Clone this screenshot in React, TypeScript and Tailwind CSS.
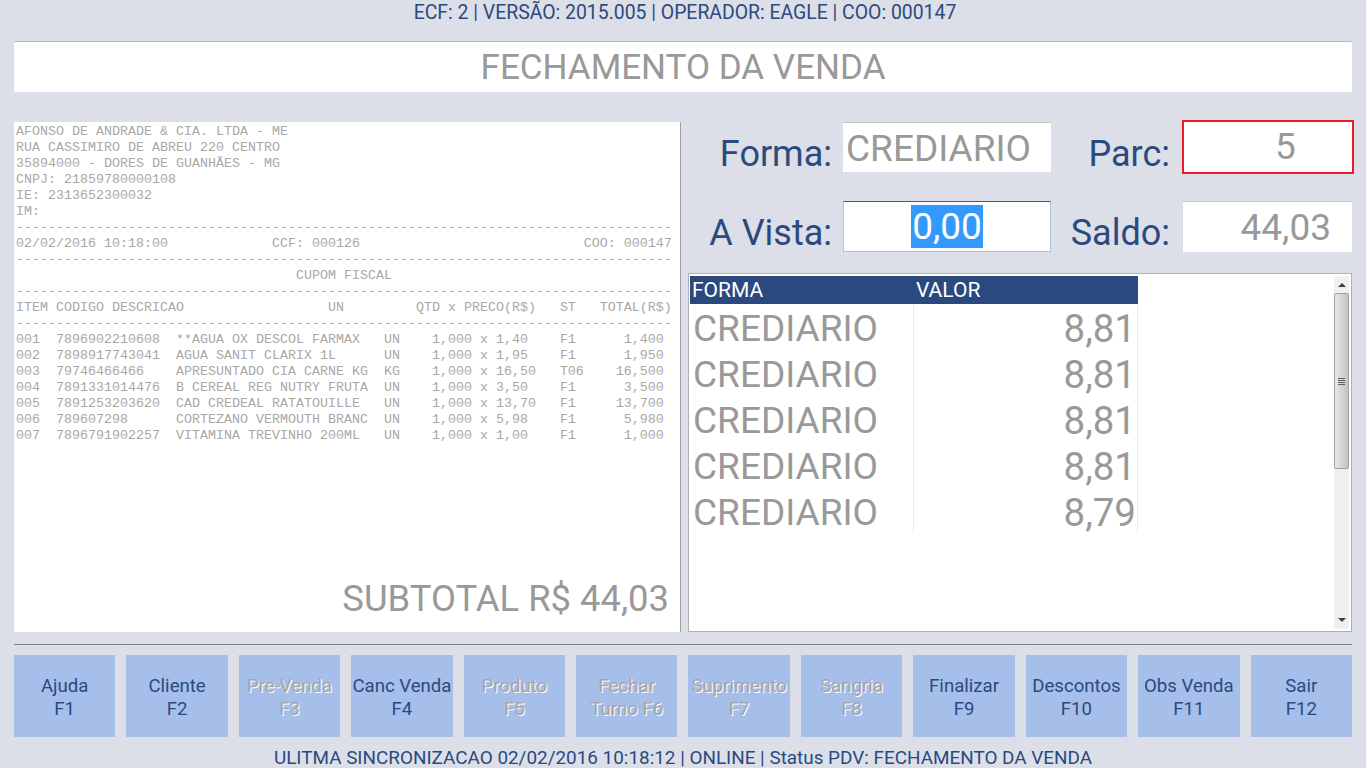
const sans = "font-['Roboto',sans-serif]";

const dashes = "-".repeat(82);

// monta uma linha do cupom nas colunas fixas
const item = (n: string, cod: string, desc: string, un: string, qtd: string, st: string, total: string) =>
  n.padEnd(5) + cod.padEnd(15) + desc.padEnd(26) + un.padEnd(6) + qtd.padEnd(16) + st.padEnd(7) + total.padStart(6);

const receipt = [
  "AFONSO DE ANDRADE & CIA. LTDA - ME",
  "RUA CASSIMIRO DE ABREU 220 CENTRO",
  "35894000 - DORES DE GUANHÃES - MG",
  "CNPJ: 21859780000108",
  "IE: 2313652300032",
  "IM:",
  dashes,
  "02/02/2016 10:18:00             CCF: 000126                            COO: 000147",
  dashes,
  "                                   CUPOM FISCAL",
  dashes,
  "ITEM CODIGO DESCRICAO                  UN         QTD x PRECO(R$)   ST   TOTAL(R$)",
  dashes,
  item("001", "7896902210608", "**AGUA OX DESCOL FARMAX", "UN", "1,000 x 1,40", "F1", "1,400"),
  item("002", "7898917743041", "AGUA SANIT CLARIX 1L", "UN", "1,000 x 1,95", "F1", "1,950"),
  item("003", "79746466466", "APRESUNTADO CIA CARNE KG", "KG", "1,000 x 16,50", "T06", "16,500"),
  item("004", "7891331014476", "B CEREAL REG NUTRY FRUTA", "UN", "1,000 x 3,50", "F1", "3,500"),
  item("005", "7891253203620", "CAD CREDEAL RATATOUILLE", "UN", "1,000 x 13,70", "F1", "13,700"),
  item("006", "789607298", "CORTEZANO VERMOUTH BRANC", "UN", "1,000 x 5,98", "F1", "5,980"),
  item("007", "7896791902257", "VITAMINA TREVINHO 200ML", "UN", "1,000 x 1,00", "F1", "1,000"),
].join("\n");

const parcelas = ["8,81", "8,81", "8,81", "8,81", "8,79"];

const buttons = [
  { top: "Ajuda", bottom: "F1" },
  { top: "Cliente", bottom: "F2" },
  { top: "Pre-Venda", bottom: "F3", off: true },
  { top: "Canc Venda", bottom: "F4" },
  { top: "Produto", bottom: "F5", off: true },
  { top: "Fechar", bottom: "Turno F6", off: true },
  { top: "Suprimento", bottom: "F7", off: true },
  { top: "Sangria", bottom: "F8", off: true },
  { top: "Finalizar", bottom: "F9" },
  { top: "Descontos", bottom: "F10" },
  { top: "Obs Venda", bottom: "F11" },
  { top: "Sair", bottom: "F12" },
];

export default function App() {
  return (
    <div className={`${sans} h-[768px] w-[1366px] overflow-hidden bg-[#dcdfe7] px-[14px] text-[#2a4a7f]`}>
      {/* Header */}
      <div className="flex h-[25px] items-center justify-center pl-[4px] text-[19.4px]">
        ECF: 2 | VERSÃO: 2015.005 | OPERADOR: EAGLE | COO: 000147
      </div>

      <div className="mt-[16px] flex h-[51px] items-center justify-center rounded-[2px] border-t border-[#b4b4b4] bg-white pt-[3px] text-[35px] text-[#999999]">
        FECHAMENTO DA VENDA
      </div>

      <div className="mt-[30px] flex h-[510px] gap-[7px]">
        {/* Cupom */}
        <div className="flex w-[667px] shrink-0 flex-col justify-between border-r border-[#a0a0a0] bg-white pb-[9px] pl-[2px] pr-[11px]">
          <pre className="pt-[2px] font-['Liberation_Mono',monospace] text-[13.33px] leading-[16px] text-[#a8a8a8]">{receipt}</pre>
          <div className="pt-px text-right text-[36.4px] leading-[48px] text-[#999999]">SUBTOTAL R$ 44,03</div>
        </div>

        {/* Pagamento */}
        <div className="flex w-[664px] flex-col">
          <div className="flex h-[50px] items-center">
            <div className="w-[144px] shrink-0 pt-[13px] text-right text-[36px] leading-none">Forma:</div>
            <div className="ml-[11px] flex h-[50px] w-[208px] shrink-0 items-center border-t border-[#c8c8c8] bg-white pl-[3px] pt-[2px] text-[37px] text-[#999999]">
              CREDIARIO
            </div>
            <div className="w-[119px] shrink-0 pt-[13px] text-right text-[36px] leading-none">Parc:</div>
            <div className="ml-[12px] flex h-[54px] w-[172px] shrink-0 items-center justify-center border-2 border-[#ed1c24] bg-white pl-[35px] text-[37px] text-[#999999]">
              5
            </div>
          </div>

          <div className="mt-[29px] flex h-[51px] items-center">
            <div className="w-[144px] shrink-0 pt-[12px] text-right text-[36px] leading-none">A Vista:</div>
            <div className="ml-[11px] flex h-[51px] w-[208px] shrink-0 items-center justify-center border border-[#a9c4dc] border-t-[#2f5f8f] bg-white text-[37px]">
              <span className="bg-[#3399ff] px-px leading-[43px] text-white">0,00</span>
            </div>
            <div className="w-[119px] shrink-0 pt-[12px] text-right text-[36px] leading-none">Saldo:</div>
            <div className="ml-[13px] flex h-[51px] w-[169px] shrink-0 items-center justify-end border-t border-[#c8c8c8] bg-white pr-[21px] pt-[2px] text-[37px] text-[#999999]">
              44,03
            </div>
          </div>

          <div className="mt-[21px] flex h-[359px] border border-[#aeb0b6] bg-white py-[2px] pl-px pr-[2px]">
            <div className="flex-1">
              <div className="flex h-[28px] w-[448px] items-center bg-[#2a4a7f] pt-[2px] text-[21px] text-white">
                <div className="w-[224px] pl-[2px]">FORMA</div>
                <div className="pl-[2px]">VALOR</div>
              </div>
              <div className="w-[448px]">
                {parcelas.map((valor, i) => (
                  <div key={i} className="flex h-[46px] text-[37px] text-[#999999]">
                    <div className="flex w-[223px] items-center pl-[3px] pt-[3px]">CREDIARIO</div>
                    <div className="flex w-[225px] items-center justify-end border-x border-[#ececec] pr-px pt-[3px] text-[38.5px]">{valor}</div>
                  </div>
                ))}
              </div>
            </div>

            {/* Scrollbar */}
            <div className="flex w-[15px] flex-col items-center bg-[#f0f0f0]">
              <div className="flex h-[17px] items-center justify-center">
                <div className="h-0 w-0 border-x-[4px] border-b-[4px] border-x-transparent border-b-[#404040]" />
              </div>
              <div className="flex h-[176px] w-[15px] items-center justify-center rounded-[2px] border border-[#a0a0a0] bg-gradient-to-r from-[#e8e8e8] to-[#c4c4c4]">
                <div className="flex w-[7px] flex-col gap-px">
                  <div className="h-px bg-[#606060]" />
                  <div className="h-px bg-[#606060]" />
                  <div className="h-px bg-[#606060]" />
                  <div className="h-px bg-[#606060]" />
                </div>
              </div>
              <div className="flex-1" />
              <div className="flex h-[19px] items-center justify-center">
                <div className="h-0 w-0 border-x-[4px] border-t-[4px] border-x-transparent border-t-[#404040]" />
              </div>
            </div>
          </div>
        </div>
      </div>

      <div className="mt-[12px] border-t border-[#808080]" />

      {/* Teclas */}
      <div className="mt-[10px] grid h-[82px] grid-cols-12 gap-[11px]">
        {buttons.map((b) => (
          <div
            key={b.bottom}
            className={`flex flex-col items-center justify-center bg-[#a6bfea] pt-[3px] text-[18.6px] leading-[23px] whitespace-nowrap ${
              b.off ? "text-[#a6a6a6] [text-shadow:1px_1px_0_#ffffff]" : ""
            }`}
          >
            <div>{b.top}</div>
            <div>{b.bottom}</div>
          </div>
        ))}
      </div>

      <div className="mt-[9px] flex h-[24px] items-center justify-center text-[18.9px]">
        ULITMA SINCRONIZACAO 02/02/2016 10:18:12 | ONLINE | Status PDV: FECHAMENTO DA VENDA
      </div>
    </div>
  );
}
